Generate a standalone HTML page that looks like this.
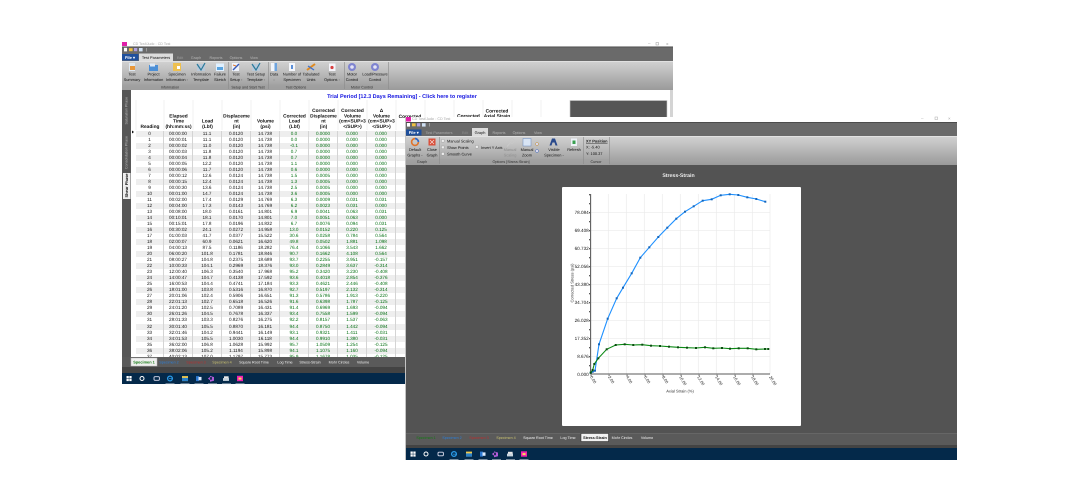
<!DOCTYPE html>
<html><head><meta charset="utf-8"><title>CD Test</title>
<style>
html,body{margin:0;padding:0;background:#fff;width:1080px;height:500px;overflow:hidden}
#root{position:absolute;left:0;top:0;width:1080px;height:500px;filter:blur(.25px);font-family:"Liberation Sans",Arial,sans-serif;text-rendering:geometricPrecision;-webkit-font-smoothing:antialiased}
svg{position:absolute;left:0;top:0}
svg text{font-family:"Liberation Sans",Arial,sans-serif;text-rendering:geometricPrecision}
.t{font-size:3.9px;text-anchor:middle;fill:#111}
.g{font-size:3.7px;text-anchor:middle;fill:#333}
.l{font-size:3.9px;fill:#111}
.w{font-size:3.7px;text-anchor:middle;fill:#eee}
.d{font-size:3.9px;text-anchor:middle;fill:#8d8d8d}
.a{font-size:4.6px;text-anchor:end;fill:#111}
.h{font-size:4.8px;font-weight:bold;text-anchor:middle;fill:#111}
#tbl{position:absolute;left:136px;top:131px;width:269px;height:226px;overflow:hidden;background:#fff;font-size:4.6px;line-height:6px;color:#111}
#tbl div{display:flex;height:6.027px;white-space:nowrap}
#tbl div:nth-child(odd){background:#eeeeee}
#tbl span{display:block;flex:none;width:29px;text-align:center;box-sizing:border-box;border-right:.5px solid #d4d4d4}
#tbl span:first-child{width:28px}
#tbl span:nth-child(n+6){color:#006f10}
</style></head><body><div id="root">

<svg width="1080" height="500" viewBox="0 0 1080 500">
<defs>
<linearGradient id="rb" x1="0" y1="0" x2="0" y2="1"><stop offset="0" stop-color="#d2d2d2"/><stop offset="1" stop-color="#9a9a9a"/></linearGradient>
<g id="task">
<rect x="-2.5" y="-2.5" width="2.3" height="2.3" fill="#fff"/><rect x=".3" y="-2.5" width="2.3" height="2.3" fill="#fff"/><rect x="-2.5" y=".3" width="2.3" height="2.3" fill="#fff"/><rect x=".3" y=".3" width="2.3" height="2.3" fill="#fff"/>
<circle cx="13" cy="0" r="2" fill="none" stroke="#fff" stroke-width="1"/>
<rect x="25" y="-1.8" width="5.4" height="3.6" rx="1" fill="none" stroke="#dde" stroke-width=".9"/>
<circle cx="41" cy="0" r="2.4" fill="none" stroke="#2b9be8" stroke-width="1.3"/><rect x="40" y="-.2" width="4" height=".7" fill="#2b9be8"/>
<rect x="53" y="-2.4" width="6" height="5" fill="#f2c94c"/><rect x="53" y="-.6" width="6" height="3.2" fill="#2a80c8"/>
<rect x="67" y="-2.4" width="3" height="5" fill="#2b78d0"/><rect x="69.5" y="-1.6" width="3" height="3.4" fill="#dcecff"/>
<path d="M81-2.6l4 1.2v3.6l-4 1zM81-1.5l-2.2 1.5L81 1.6" fill="#b25cd8"/><rect x="81" y="-1.4" width="2" height="2.6" fill="#1c2d55"/>
<rect x="95" y="-2.2" width="4.6" height="3" fill="#e8e8e8"/><rect x="94" y="-.4" width="6" height="2.8" fill="#c8d4de"/>
<rect x="108" y="-2.7" width="6" height="5.4" fill="#f21fb0"/><rect x="109.5" y="-.9" width="3" height="2" fill="#f6dd58"/>
<g fill="#c6ced6"><rect x="36.500" y="5" width="9" height=".6"/><rect x="51.500" y="5" width="9" height=".6"/><rect x="65.500" y="5" width="9" height=".6"/><rect x="79" y="5" width="9" height=".6"/><rect x="93" y="5" width="9" height=".6"/><rect x="106.500" y="5" width="9" height=".6"/></g>
</g>
<marker id="mb" markerWidth="3" markerHeight="3" refX="1.5" refY="1.5" markerUnits="userSpaceOnUse"><rect width="2" height="2" x=".5" y=".5" fill="#1565b8"/></marker>
<marker id="mg" markerWidth="3" markerHeight="3" refX="1.5" refY="1.5" markerUnits="userSpaceOnUse"><rect width="2" height="2" x=".5" y=".5" fill="#0a4d10"/></marker>
</defs>

<!-- WINDOW 1 -->
<rect x="122" y="42" width="551" height="342" fill="#fff"/>
<rect x="122" y="42" width="5" height="4" fill="#e020a8"/>
<text x="133" y="45" style="font-size:3.6px;fill:#aaa">CD Test\Jude - CD Test</text>
<text x="648" y="45" style="font-size:4.5px;fill:#999">–</text><rect x="656" y="42.5" width="2.5" height="2.5" fill="none" stroke="#999" stroke-width=".5"/><text x="666" y="45.5" style="font-size:4.5px;fill:#999">×</text>
<rect x="122" y="46.5" width="551" height="14.5" fill="#6a6a6a"/>
<rect x="122" y="46.5" width="551" height=".8" fill="#444"/>
<rect x="124" y="47.8" width="3" height="3.6" fill="#fff"/><rect x="129" y="48.2" width="3.6" height="3" fill="#f0c040"/><rect x="134" y="48" width="3.2" height="3.2" fill="#b0a0e0"/><rect x="139" y="48" width="3.6" height="3.4" fill="#cfe0f2"/><rect x="146" y="48" width=".6" height="3.5" fill="#bbb"/>
<rect x="122" y="54" width="16.5" height="6.5" fill="#1e4f9c"/>
<text x="130" y="58.800" style="font-size:4px;font-weight:bold;fill:#fff;text-anchor:middle">File ▾</text>
<rect x="139" y="53.5" width="34" height="8" fill="#dcdcdc"/>
<text class="t" x="156" y="59">Test Parameters</text>
<text class="w" x="180" y="59" style="fill:#9a9a9a">Edit</text><text class="w" x="196" y="59" style="fill:#b4b4b4">Graph</text><text class="w" x="216" y="59" style="fill:#b4b4b4">Reports</text><text class="w" x="236" y="59" style="fill:#b4b4b4">Options</text><text class="w" x="254" y="59" style="fill:#b4b4b4">View</text>
<rect x="122" y="61" width="551" height="29" fill="url(#rb)"/>
<rect x="122" y="61" width="551" height=".7" fill="#e8e8e8"/>
<rect x="122" y="84.5" width="266" height="5.5" fill="#a0a0a0" opacity=".6"/>
<g fill="#8a8a8a"><rect x="228" y="62" width=".6" height="27"/><rect x="268" y="62" width=".6" height="27"/><rect x="344" y="62" width=".6" height="27"/><rect x="388" y="62" width=".6" height="27"/></g>
<!-- ribbon 1 icons -->
<rect x="129" y="63" width="6" height="8" fill="#dfe8f0"/><rect x="130" y="66" width="5" height="4" fill="#e8973a"/>
<rect x="149" y="65" width="9" height="6" fill="#4c8fd6"/><rect x="150" y="63.5" width="5" height="3" fill="#dfe9f5"/>
<rect x="173" y="63" width="8" height="8" fill="#eec050"/><rect x="177" y="66" width="3" height="3" fill="#fff"/>
<rect x="197" y="64" width="8" height="7" fill="#b8c8d8"/><path d="M197 64l4 6 4-7" stroke="#2a7a9a" stroke-width="1.2" fill="none"/>
<rect x="216" y="63.5" width="8" height="7.5" fill="#dff0ff"/><rect x="217" y="67" width="6" height="3" fill="#5aa4e0"/>
<rect x="232" y="63" width="7" height="8" fill="#eef2fa"/><path d="M233 70l6-6" stroke="#3558b8" stroke-width="1.4"/><path d="M233 65l3 1" stroke="#e07a30" stroke-width="1"/>
<rect x="252" y="64" width="8" height="7" fill="#b8c8d8"/><path d="M252 64l4 6 4-7" stroke="#2a7a9a" stroke-width="1.2" fill="none"/>
<rect x="271" y="63" width="6" height="8" fill="#f0f4fa"/><rect x="274.5" y="63" width="2.5" height="8" fill="#6ea4de"/>
<rect x="289" y="63" width="6" height="8" fill="#f4f6fb"/><rect x="291" y="65" width="2" height="4" fill="#5a8fd8"/>
<path d="M307 70l8-6" stroke="#e08a20" stroke-width="2"/><path d="M308 66l6 4" stroke="#3a70d0" stroke-width="1.2"/>
<rect x="329" y="63.5" width="6.5" height="7.5" fill="#f4f4fa"/><circle cx="332" cy="67.5" r="1.6" fill="#d84040"/>
<circle cx="352" cy="67" r="4" fill="#7f84d0"/><circle cx="352" cy="67" r="1.8" fill="#e4e4f4"/>
<circle cx="375" cy="67" r="4" fill="#7f84d0"/><circle cx="375" cy="67" r="1.8" fill="#e4e4f4"/>
<!-- ribbon 1 text -->
<text class="t" x="132" y="75.500">Test</text><text class="t" x="132" y="81">Summary</text>
<text class="t" x="153.5" y="75.500">Project</text><text class="t" x="153.5" y="81">Information</text>
<text class="t" x="177" y="75.500">Specimen</text><text class="t" x="177" y="81">Information -</text>
<text class="t" x="201" y="75.500">Information</text><text class="t" x="201" y="81">Template</text>
<text class="t" x="220" y="75.500">Failure</text><text class="t" x="220" y="81">Sketch</text>
<text class="t" x="236" y="75.500">Test</text><text class="t" x="236" y="81">Setup -</text>
<text class="t" x="256" y="75.500">Test Setup</text><text class="t" x="256" y="81">Template -</text>
<text class="t" x="274" y="75.500">Data</text><text class="t" x="274" y="81">-</text>
<text class="t" x="292" y="75.500">Number of</text><text class="t" x="292" y="81">Specimen</text>
<text class="t" x="311" y="75.500">Tabulated</text><text class="t" x="311" y="81">Units</text>
<text class="t" x="332" y="75.500">Test</text><text class="t" x="332" y="81">Options -</text>
<text class="t" x="352" y="75.500">Motor</text><text class="t" x="352" y="81">Control</text>
<text class="t" x="375" y="75.500">Load/Pressure</text><text class="t" x="375" y="81">Control</text>
<text class="g" x="170" y="88.300">Information</text><text class="g" x="248" y="88.300">Setup and Start Test</text><text class="g" x="296" y="88.300">Test Options</text><text class="g" x="362" y="88.300">Motor Control</text>

<!-- left rail -->
<rect x="122" y="90" width="9" height="267" fill="#575757"/>
<text transform="translate(127.500,124.500) rotate(-90)" style="font-size:3.6px;fill:#bbb">Saturation Phase</text>
<text transform="translate(127.500,169) rotate(-90)" style="font-size:3.6px;fill:#bbb">Consolidation Phase</text>
<rect x="123" y="173" width="7.5" height="26" fill="#efefef"/>
<text transform="translate(128.200,197.500) rotate(-90)" style="font-size:4px;font-weight:bold;fill:#111">Shear Phase</text>
<text x="402" y="98" style="font-size:5.500px;font-weight:bold;fill:#1414e0;text-anchor:middle">Trial Period [12.3 Days Remaining] - Click here to register</text>
<!-- table header -->
<g stroke="#e4e4e4" stroke-width=".5"><path d="M136 100V130M164 100V130M193 100V130M222 100V130M251 100V130M280 100V130M309 100V130M338 100V130M367 100V130M396 100V130M425 100V117M454 100V117M483 100V117M512 100V117M541 100V117M570 100V117"/></g>
<text class="h" x="150" y="128">Reading</text>
<text class="h" x="178.5" y="117.5">Elapsed</text><text class="h" x="178.5" y="122.7">Time</text><text class="h" x="178.5" y="128">(hh:mm:ss)</text>
<text class="h" x="207.5" y="122.7">Load</text><text class="h" x="207.5" y="128">(Lbf)</text>
<text class="h" x="236.5" y="117.5">Displaceme</text><text class="h" x="236.5" y="122.7">nt</text><text class="h" x="236.5" y="128">(in)</text>
<text class="h" x="265.5" y="122.7">Volume</text><text class="h" x="265.5" y="128">(psi)</text>
<text class="h" x="294.5" y="117.5">Corrected</text><text class="h" x="294.5" y="122.7">Load</text><text class="h" x="294.5" y="128">(Lbf)</text>
<text class="h" x="323.5" y="112">Corrected</text><text class="h" x="323.5" y="117.5">Displaceme</text><text class="h" x="323.5" y="122.7">nt</text><text class="h" x="323.5" y="128">(in)</text>
<text class="h" x="352.5" y="112">Corrected</text><text class="h" x="352.5" y="117.5">Volume</text><text class="h" x="352.5" y="122.7">(cm&lt;SUP&gt;3</text><text class="h" x="352.5" y="128">&lt;/SUP&gt;)</text>
<text class="h" x="381.5" y="112">Δ</text><text class="h" x="381.5" y="117.5">Volume</text><text class="h" x="381.5" y="122.7">(cm&lt;SUP&gt;3</text><text class="h" x="381.5" y="128">&lt;/SUP&gt;)</text>
<text class="h" x="410" y="118">Corrected</text><text class="h" x="468.500" y="117.700">Corrected</text><text class="h" x="497" y="112.5">Corrected</text><text class="h" x="497" y="117.700">Axial Strain</text>
<path d="M132 130.500l2 1.500-2 1.500z" fill="#111"/>
<!-- right side of window 1 -->
<rect x="570" y="100.5" width="97" height="17" fill="#565656" stroke="#ccc" stroke-width=".6"/>
<rect x="670" y="90" width="3" height="27" fill="#d4d4d4"/>
<!-- tabs strip 1 -->
<rect x="122" y="357" width="283" height="10" fill="#5a5a5a"/>
<rect x="122" y="367" width="283" height="6" fill="#434343"/>
<rect x="131" y="358" width="26" height="8" fill="#f0f0f0" stroke="#bbb" stroke-width=".5"/>
<text class="t" x="144" y="363.500" style="fill:#147a14;font-weight:bold">Specimen 1</text>
<text class="w" x="169" y="363.500" style="fill:#2c7fd8">Specimen 2</text>
<text class="w" x="196" y="363.500" style="fill:#b83030">Specimen 3</text>
<text class="w" x="222" y="363.500" style="fill:#c8c070">Specimen 4</text>
<text class="w" x="254" y="363.500">Square Root Time</text><text class="w" x="285" y="363.500">Log Time</text><text class="w" x="310" y="363.500">Stress-Strain</text><text class="w" x="339" y="363.500">Mohr Circles</text><text class="w" x="363" y="363.500">Volume</text>
<rect x="122" y="373" width="283" height="11" fill="#04294a"/>
<use href="#task" transform="translate(129,378.5)"/>
</svg>

<div id="tbl">
<div><span>0</span><span>00:00:00</span><span>11.1</span><span>0.0120</span><span>14.738</span><span>0.0</span><span>0.0000</span><span>0.000</span><span>0.000</span></div>
<div><span>1</span><span>00:00:01</span><span>11.1</span><span>0.0120</span><span>14.738</span><span>0.0</span><span>0.0000</span><span>0.000</span><span>0.000</span></div>
<div><span>2</span><span>00:00:02</span><span>11.0</span><span>0.0120</span><span>14.738</span><span>-0.1</span><span>0.0000</span><span>0.000</span><span>0.000</span></div>
<div><span>3</span><span>00:00:03</span><span>11.8</span><span>0.0120</span><span>14.738</span><span>0.7</span><span>0.0000</span><span>0.000</span><span>0.000</span></div>
<div><span>4</span><span>00:00:04</span><span>11.8</span><span>0.0120</span><span>14.738</span><span>0.7</span><span>0.0000</span><span>0.000</span><span>0.000</span></div>
<div><span>5</span><span>00:00:05</span><span>12.2</span><span>0.0120</span><span>14.738</span><span>1.1</span><span>0.0000</span><span>0.000</span><span>0.000</span></div>
<div><span>6</span><span>00:00:06</span><span>11.7</span><span>0.0120</span><span>14.738</span><span>0.6</span><span>0.0000</span><span>0.000</span><span>0.000</span></div>
<div><span>7</span><span>00:00:12</span><span>12.6</span><span>0.0124</span><span>14.738</span><span>1.5</span><span>0.0005</span><span>0.000</span><span>0.000</span></div>
<div><span>8</span><span>00:00:15</span><span>12.4</span><span>0.0124</span><span>14.738</span><span>1.3</span><span>0.0005</span><span>0.000</span><span>0.000</span></div>
<div><span>9</span><span>00:00:30</span><span>13.6</span><span>0.0124</span><span>14.738</span><span>2.5</span><span>0.0005</span><span>0.000</span><span>0.000</span></div>
<div><span>10</span><span>00:01:00</span><span>14.7</span><span>0.0124</span><span>14.738</span><span>3.6</span><span>0.0005</span><span>0.000</span><span>0.000</span></div>
<div><span>11</span><span>00:02:00</span><span>17.4</span><span>0.0129</span><span>14.769</span><span>6.3</span><span>0.0009</span><span>0.031</span><span>0.031</span></div>
<div><span>12</span><span>00:04:00</span><span>17.3</span><span>0.0143</span><span>14.769</span><span>6.2</span><span>0.0023</span><span>0.031</span><span>0.000</span></div>
<div><span>13</span><span>00:08:00</span><span>18.0</span><span>0.0161</span><span>14.801</span><span>6.9</span><span>0.0041</span><span>0.063</span><span>0.031</span></div>
<div><span>14</span><span>00:10:01</span><span>18.1</span><span>0.0170</span><span>14.801</span><span>7.0</span><span>0.0051</span><span>0.063</span><span>0.000</span></div>
<div><span>15</span><span>00:15:01</span><span>17.8</span><span>0.0196</span><span>14.832</span><span>6.7</span><span>0.0076</span><span>0.094</span><span>0.031</span></div>
<div><span>16</span><span>00:30:02</span><span>24.1</span><span>0.0272</span><span>14.958</span><span>13.0</span><span>0.0152</span><span>0.220</span><span>0.125</span></div>
<div><span>17</span><span>01:00:03</span><span>41.7</span><span>0.0377</span><span>15.522</span><span>30.6</span><span>0.0258</span><span>0.784</span><span>0.564</span></div>
<div><span>18</span><span>02:00:07</span><span>60.9</span><span>0.0621</span><span>16.620</span><span>49.8</span><span>0.0502</span><span>1.881</span><span>1.098</span></div>
<div><span>19</span><span>04:00:13</span><span>87.5</span><span>0.1186</span><span>18.282</span><span>76.4</span><span>0.1066</span><span>3.543</span><span>1.662</span></div>
<div><span>20</span><span>06:00:20</span><span>101.8</span><span>0.1781</span><span>18.846</span><span>90.7</span><span>0.1662</span><span>4.108</span><span>0.564</span></div>
<div><span>21</span><span>08:00:27</span><span>104.8</span><span>0.2375</span><span>18.689</span><span>93.7</span><span>0.2255</span><span>3.951</span><span>-0.157</span></div>
<div><span>22</span><span>10:00:33</span><span>104.1</span><span>0.2969</span><span>18.376</span><span>93.0</span><span>0.2849</span><span>3.637</span><span>-0.314</span></div>
<div><span>23</span><span>12:00:40</span><span>106.3</span><span>0.3540</span><span>17.968</span><span>95.2</span><span>0.3420</span><span>3.230</span><span>-0.408</span></div>
<div><span>24</span><span>14:00:47</span><span>104.7</span><span>0.4138</span><span>17.592</span><span>93.6</span><span>0.4018</span><span>2.854</span><span>-0.376</span></div>
<div><span>25</span><span>16:00:53</span><span>104.4</span><span>0.4741</span><span>17.184</span><span>93.3</span><span>0.4621</span><span>2.446</span><span>-0.408</span></div>
<div><span>26</span><span>18:01:00</span><span>103.8</span><span>0.5316</span><span>16.870</span><span>92.7</span><span>0.5197</span><span>2.132</span><span>-0.314</span></div>
<div><span>27</span><span>20:01:06</span><span>102.4</span><span>0.5906</span><span>16.651</span><span>91.3</span><span>0.5786</span><span>1.913</span><span>-0.220</span></div>
<div><span>28</span><span>22:01:13</span><span>102.7</span><span>0.6518</span><span>16.526</span><span>91.6</span><span>0.6398</span><span>1.787</span><span>-0.125</span></div>
<div><span>29</span><span>24:01:20</span><span>102.5</span><span>0.7089</span><span>16.431</span><span>91.4</span><span>0.6969</span><span>1.693</span><span>-0.094</span></div>
<div><span>30</span><span>26:01:26</span><span>104.5</span><span>0.7678</span><span>16.337</span><span>93.4</span><span>0.7558</span><span>1.599</span><span>-0.094</span></div>
<div><span>31</span><span>28:01:33</span><span>103.3</span><span>0.8276</span><span>16.275</span><span>92.2</span><span>0.8157</span><span>1.537</span><span>-0.063</span></div>
<div><span>32</span><span>30:01:40</span><span>105.5</span><span>0.8870</span><span>16.181</span><span>94.4</span><span>0.8750</span><span>1.442</span><span>-0.094</span></div>
<div><span>33</span><span>32:01:46</span><span>104.2</span><span>0.9441</span><span>16.149</span><span>93.1</span><span>0.9321</span><span>1.411</span><span>-0.031</span></div>
<div><span>34</span><span>34:01:53</span><span>105.5</span><span>1.0030</span><span>16.118</span><span>94.4</span><span>0.9910</span><span>1.380</span><span>-0.031</span></div>
<div><span>35</span><span>36:02:00</span><span>106.8</span><span>1.0628</span><span>15.992</span><span>95.7</span><span>1.0509</span><span>1.254</span><span>-0.125</span></div>
<div><span>36</span><span>38:02:06</span><span>105.2</span><span>1.1194</span><span>15.898</span><span>94.1</span><span>1.1075</span><span>1.160</span><span>-0.094</span></div>
<div><span>37</span><span>40:02:13</span><span>107.0</span><span>1.1797</span><span>15.773</span><span>95.9</span><span>1.1678</span><span>1.035</span><span>-0.125</span></div>
</div>

<svg width="1080" height="500" viewBox="0 0 1080 500">
<!-- WINDOW 2 -->
<rect x="405" y="117" width="552" height="343" fill="#fff"/>
<rect x="405" y="117" width="1" height="343" fill="#c4c4c4"/>
<rect x="406" y="117" width="5" height="4.500" fill="#e020a8"/>
<text x="412" y="120" style="font-size:3.7px;fill:#aaa">CD Test\Jude - CD Test</text>
<text x="921" y="120" style="font-size:4.5px;fill:#aaa">–</text><rect x="935" y="117" width="2.5" height="2.5" fill="none" stroke="#aaa" stroke-width=".5"/><text x="948" y="120" style="font-size:4.5px;fill:#aaa">×</text>
<rect x="406" y="122" width="551" height="14" fill="#6a6a6a"/>
<rect x="406" y="122" width="551" height=".8" fill="#444"/>
<rect x="407" y="123" width="3" height="3.6" fill="#fff"/><rect x="412" y="123.3" width="3.6" height="3" fill="#f0c040"/><rect x="417" y="123.2" width="3.2" height="3.2" fill="#b0a0e0"/><rect x="422" y="123.2" width="3.6" height="3.4" fill="#cfe0f2"/><rect x="429" y="123" width=".6" height="3.5" fill="#bbb"/>
<rect x="406" y="129.5" width="15.5" height="6" fill="#1e4f9c"/>
<text x="413.7" y="134" style="font-size:4px;font-weight:bold;fill:#fff;text-anchor:middle">File ▾</text>
<text class="w" x="439" y="134" style="fill:#a8a8a8">Test Parameters</text>
<text class="w" x="465" y="134" style="fill:#888">Edit</text>
<rect x="472" y="128" width="16" height="8" fill="#dcdcdc"/>
<text class="t" x="480" y="134">Graph</text>
<text class="w" x="499" y="134" style="fill:#b4b4b4">Reports</text><text class="w" x="519" y="134" style="fill:#b4b4b4">Options</text><text class="w" x="538" y="134" style="fill:#b4b4b4">View</text>
<rect x="406" y="136" width="551" height="29" fill="url(#rb)"/>
<rect x="406" y="136" width="551" height=".7" fill="#eaeaea"/>
<rect x="406" y="159" width="203" height="6" fill="#a0a0a0" opacity=".6"/>
<g fill="#8a8a8a"><rect x="439" y="137" width=".6" height="27"/><rect x="583" y="137" width=".6" height="27"/><rect x="609" y="137" width=".6" height="27"/></g>
<circle cx="415" cy="142" r="3.4" fill="none" stroke="#e0732a" stroke-width="1.6"/><path d="M415 138.6a3.4 3.4 0 0 1 3.4 3.4" stroke="#2a6ad0" stroke-width="1.6" fill="none"/>
<rect x="428.5" y="138.5" width="7" height="7" fill="#d94f3a"/><path d="M430 140l4 4m0-4l-4 4" stroke="#f6e0dc" stroke-width=".7"/>
<rect x="441.5" y="139.5" width="2.6" height="2.6" fill="#eee" stroke="#888" stroke-width=".3"/><rect x="441.5" y="146" width="2.6" height="2.6" fill="#eee" stroke="#888" stroke-width=".3"/><rect x="441.5" y="152.5" width="2.6" height="2.6" fill="#eee" stroke="#888" stroke-width=".3"/><rect x="475.5" y="145.5" width="2.6" height="2.6" fill="#eee" stroke="#888" stroke-width=".3"/>
<circle cx="512" cy="141" r="2.4" fill="none" stroke="#c8c8c8" stroke-width="1"/><path d="M510 143l-3 3.5" stroke="#c8c8c8" stroke-width="1.2"/>
<rect x="523" y="138.5" width="8" height="7.5" fill="#d8e4f4" stroke="#6a8ac0" stroke-width=".5"/><circle cx="537" cy="144" r="1.5" fill="#d8d8f0" stroke="#c89030" stroke-width=".5"/><circle cx="537" cy="151" r="1.5" fill="#d8d8f0" stroke="#4a70c0" stroke-width=".5"/>
<path d="M552 138.5l-2.5 7h2l1-3h2l1 3h2l-2.500-7z" fill="#2a4a8c"/>
<rect x="571" y="138.500" width="6" height="7.500" fill="#eef2f8"/><rect x="572.500" y="140.500" width="3" height="3.500" fill="#3aa050"/>
<text class="t" x="415" y="151">Default</text><text class="t" x="415" y="156.500">Graphs -</text>
<text class="t" x="432" y="151">Close</text><text class="t" x="432" y="156.500">Graph</text>
<text class="l" x="447" y="142.500">Manual Scaling</text><text class="l" x="447" y="149">Show Points</text><text class="l" x="447" y="155.300">Smooth Curve</text><text class="l" x="481" y="149">Invert Y Axis</text>
<text class="d" x="510" y="151">Manual</text><text class="d" x="510" y="156.500">Scaling</text>
<text class="t" x="527" y="151">Manual</text><text class="t" x="527" y="156.500">Zoom</text>
<text class="t" x="554" y="151">Visible</text><text class="t" x="554" y="156.500">Specimen -</text>
<text class="t" x="574" y="151">Refresh</text>
<text class="l" x="586" y="142.500" style="font-weight:bold;text-decoration:underline">XY Position</text><text class="l" x="586" y="148.500">X: -5.40</text><text class="l" x="586" y="155">Y: 100.37</text>
<text class="g" x="422" y="163">Graph</text><text class="g" x="511" y="163">Options [Stress-Strain]</text><text class="g" x="596" y="163">Cursor</text>

<rect x="406" y="165" width="551" height="268" fill="#535353"/>
<text x="678.500" y="177" style="font-size:5.200px;font-weight:bold;fill:#eee;text-anchor:middle">Stress-Strain</text>
<rect x="562" y="187" width="239" height="239" rx="1" fill="#fff"/>
<!-- grid -->
<g stroke="#eaeaea" stroke-width=".7" fill="none">
<path d="M608.300 194V374M626.300 194V374M644.300 194V374M662.300 194V374M680.300 194V374M698.300 194V374M716.300 194V374M734.300 194V374M752.300 194V374M770 194V374"/>
<path d="M591 212.300H770M591 230.300H770M591 248.300H770M591 266.300H770M591 284.300H770M591 302.300H770M591 320.300H770M591 338.300H770M591 356.300H770"/>
</g>
<path d="M590.700 194V374H770" fill="none" stroke="#222" stroke-width=".8"/>
<path d="M589.500 194.300V374" stroke="#222" stroke-width="1" stroke-dasharray="1 8" fill="none"/>
<path d="M590.700 375.500H770" stroke="#222" stroke-width="1.500" stroke-dasharray=".7 17.300" fill="none"/>
<text class="a" x="588.700" y="213.900">78.084</text><text class="a" x="588.700" y="231.900">69.408</text><text class="a" x="588.700" y="249.900">60.732</text><text class="a" x="588.700" y="267.900">52.056</text><text class="a" x="588.700" y="285.900">43.380</text><text class="a" x="588.700" y="303.900">34.704</text><text class="a" x="588.700" y="321.900">26.028</text><text class="a" x="588.700" y="339.900">17.352</text><text class="a" x="588.700" y="357.900">8.676</text><text class="a" x="588.700" y="375.900">0.000</text>
<text transform="translate(573.500,283) rotate(-90)" style="font-size:4px;fill:#333;text-anchor:middle">Corrected Stress (psi)</text>
<g style="font-size:4.100px;fill:#222">
<text transform="translate(590,377) rotate(58)">0.00</text><text transform="translate(608,377) rotate(58)">2.00</text><text transform="translate(626,377) rotate(58)">4.00</text><text transform="translate(644,377) rotate(58)">6.00</text><text transform="translate(662,377) rotate(58)">8.00</text><text transform="translate(679,377) rotate(58)">10.00</text><text transform="translate(697,377) rotate(58)">12.00</text><text transform="translate(715,377) rotate(58)">14.00</text><text transform="translate(733,377) rotate(58)">16.00</text><text transform="translate(751,377) rotate(58)">18.00</text><text transform="translate(769,377) rotate(58)">20.00</text>
</g>
<text x="680" y="392.300" style="font-size:4px;fill:#333;text-anchor:middle">Axial Strain (%)</text>
<polyline fill="none" stroke="#1e90ff" stroke-width="1.100" marker-mid="url(#mb)" marker-start="url(#mb)" marker-end="url(#mb)" points="590.700,372.700 592.700,371.700 595,370.700 599,344.300 607.700,318.700 616.700,298.300 623,287.700 631.700,273.300 640.300,257.700 649.300,247.300 658.300,237 667.300,227.700 676.300,218.700 685,211.700 693.700,206.300 702.700,200.700 711.700,199.300 720.700,195.300 729.700,194.300 738.300,195 747.300,197.300 756.300,199 765.300,201.700"/>
<polyline fill="none" stroke="#0b8a14" stroke-width="1.100" marker-mid="url(#mg)" marker-start="url(#mg)" marker-end="url(#mg)" points="590.700,372.700 592.700,370 594.300,364 598.300,358.300 606.700,349.300 615.700,345 624.700,344.300 633.300,345 642.300,344.700 651,345.700 660,346 669,346.700 678,347.300 687,347.700 696,348 705,347.300 713.300,348.300 722,348 730,348.700 738.700,348.300 747.700,348.300 756.300,349.300 765,349 768.300,349"/>

<!-- tabs strip 2 -->
<rect x="406" y="433" width="551" height="12" fill="#5a5a5a"/>
<rect x="406" y="433" width="551" height=".6" fill="#6e6e6e"/>
<rect x="406" y="445" width="551" height="3" fill="#434343"/>
<text class="w" x="426" y="439" style="fill:#147a14">Specimen 1</text>
<text class="w" x="452" y="439" style="fill:#2c7fd8">Specimen 2</text>
<text class="w" x="479" y="439" style="fill:#b83030">Specimen 3</text>
<text class="w" x="506" y="439" style="fill:#c8c070">Specimen 4</text>
<text class="w" x="538" y="439">Square Root Time</text><text class="w" x="568" y="439">Log Time</text>
<rect x="581" y="433.500" width="27.500" height="8" fill="#f2f2f2" stroke="#222" stroke-width=".5"/>
<text class="t" x="595" y="439" style="font-weight:bold;font-size:3.800px">Stress-Strain</text>
<text class="w" x="622" y="439">Mohr Circles</text><text class="w" x="647" y="439">Volume</text>
<rect x="406" y="448" width="551" height="12" fill="#04294a"/>
<use href="#task" transform="translate(413,454)"/>
</svg>
</div></body></html>
